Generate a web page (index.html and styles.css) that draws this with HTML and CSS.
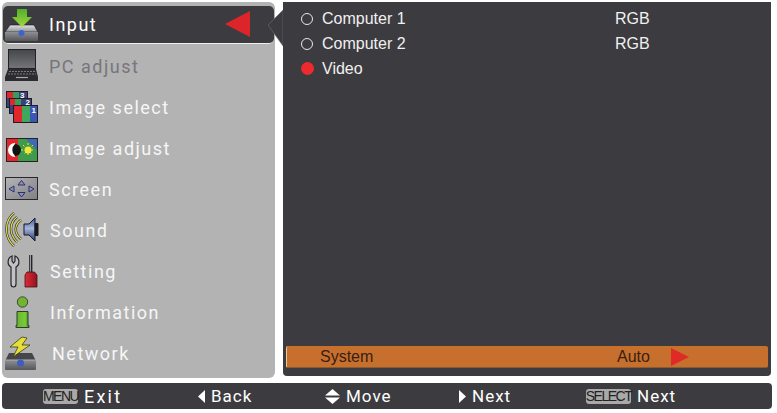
FILE: index.html
```html
<!DOCTYPE html>
<html lang="en">
<head>
<meta charset="utf-8">
<title>Input menu</title>
<link rel="stylesheet" href="styles.css">
</head>
<body>
<div class="screen">
  <div class="main">
    <nav class="menu">
      <div class="item selected">
        <svg class="icon" viewBox="0 0 34 33">
          <defs>
            <linearGradient id="dev" x1="0" y1="0" x2="0" y2="1"><stop offset="0" stop-color="#e2e2e4"/><stop offset="1" stop-color="#8f9094"/></linearGradient>
            <linearGradient id="arrow" x1="0" y1="0" x2="0" y2="1"><stop offset="0" stop-color="#4faf2c"/><stop offset="1" stop-color="#a4d93c"/></linearGradient>
            <linearGradient id="body" x1="0" y1="0" x2="0" y2="1"><stop offset="0" stop-color="#8e9094"/><stop offset="1" stop-color="#55565a"/></linearGradient>
            <linearGradient id="scr" x1="0" y1="0" x2="0" y2="1"><stop offset="0" stop-color="#44464a"/><stop offset="1" stop-color="#74767a"/></linearGradient>
            <linearGradient id="gray" x1="0" y1="0" x2="1" y2="1"><stop offset="0" stop-color="#b5b5b8"/><stop offset="1" stop-color="#808084"/></linearGradient>
            <linearGradient id="cone" x1="0" y1="0" x2="0" y2="1"><stop offset="0" stop-color="#3a5098"/><stop offset=".45" stop-color="#a8b6da"/><stop offset="1" stop-color="#26346c"/></linearGradient>
            <linearGradient id="red" x1="0" y1="0" x2="1" y2="0"><stop offset="0" stop-color="#e02a38"/><stop offset="1" stop-color="#8e1420"/></linearGradient>
            <linearGradient id="grn" x1="0" y1="0" x2="1" y2="0"><stop offset="0" stop-color="#5fb52c"/><stop offset=".7" stop-color="#7ccb36"/><stop offset="1" stop-color="#3c8a2a"/></linearGradient>
          </defs>
          <path d="M5 17H29L33 24H0Z" fill="url(#dev)" stroke="#16161a" stroke-width=".6"/>
          <path d="M0 24H33V32Q33 33 32 33H1Q0 33 0 32Z" fill="url(#body)"/>
          <circle cx="16.500" cy="25" r="3" fill="#3f63c8"/>
          <path d="M12 1H22V9H27L17 19L7 9H12Z" fill="url(#arrow)"/>
        </svg>
        <span class="label">Input</span>
        <svg class="marker" viewBox="0 0 26 26"><path d="M0 13 L25 0 V26Z" fill="#dc2529"/></svg>
      </div>
      <div class="item dim">
        <svg class="icon" viewBox="0 0 34 33">
          <rect x="3.500" y="-.5" width="27" height="19" fill="url(#scr)" stroke="#222226"/>
          <path d="M3 19H31L33 27V31H0V27Z" fill="#2c2c30"/>
          <path d="M4 21.500H30M3 24H31" stroke="#7a7a7e" stroke-dasharray="2 1"/>
          <path d="M11 27.500H23" stroke="#a8a8ac" stroke-width="1.200"/>
        </svg>
        <span class="label">PC adjust</span>
      </div>
      <div class="item">
        <svg class="icon" viewBox="0 0 34 33">
          <g stroke="#1e1e26">
            <rect x="1.500" y=".5" width="21" height="16" fill="#39407c"/>
            <rect x="4.500" y="7.500" width="22" height="15" fill="#39407c"/>
            <rect x="8.500" y="14.500" width="24" height="17" fill="#3a57b4"/>
          </g>
          <rect x="2" y="1" width="6" height="6" fill="#e0282c"/><rect x="8" y="1" width="6" height="6" fill="#3a9c58"/>
          <rect x="5" y="8" width="5" height="6" fill="#e0282c"/><rect x="10" y="8" width="6" height="6" fill="#3a9c58"/>
          <rect x="9" y="15" width="8" height="16" fill="#e0282c"/><rect x="17" y="15" width="8" height="16" fill="#3fa65c"/>
          <text class="digit" x="15" y="6.500">3</text>
          <text class="digit" x="20.400" y="14">2</text>
          <text class="digit" x="26.500" y="22">1</text>
        </svg>
        <span class="label">Image select</span>
      </div>
      <div class="item">
        <svg class="icon" viewBox="0 0 34 33">
          <rect x="1.500" y="6.500" width="31" height="23" fill="#3e68b8" stroke="#222226"/>
          <rect x="2" y="7" width="11" height="22" fill="#e4252b"/>
          <path d="M13 7H21L32 18V29H13Z" fill="#3f9a4c"/>
          <path d="M10 11a7 7 0 0 0 0 14Z" fill="#fff"/><path d="M10 12a6 6 0 0 1 0 12a8 8 0 0 1 0 -12Z" fill="#111"/>
          <circle cx="23" cy="18" r="3.500" fill="#f2e63a"/>
          <path d="M23 11V25M16 18H30M18 13L28 23M28 13L18 23" stroke="#f2e63a" stroke-dasharray="2 8"/>
        </svg>
        <span class="label">Image adjust</span>
      </div>
      <div class="item">
        <svg class="icon" viewBox="0 0 34 33">
          <rect x=".5" y="4.500" width="32" height="22" fill="url(#gray)" stroke="#28282c"/>
          <path d="M16.500 7.500L20 12H13ZM16.500 24L13 19.500H20ZM4 16L9 13V19ZM29 16L24 13V19Z" fill="#8e90b4" stroke="#2c2f70"/>
        </svg>
        <span class="label">Screen</span>
      </div>
      <div class="item snd">
        <svg class="icon" viewBox="0 0 34 33">
          <g fill="none" stroke="#2a2a1e" stroke-width="2.400">
            <path d="M9 -1C-1 7 -1 23 9 32"/><path d="M12 3C4 9 4 20 12 28"/><path d="M16 6C9 11 9 19 16 25"/>
          </g>
          <g fill="none" stroke="#dede52" stroke-width="1.200">
            <path d="M9 -1C-1 7 -1 23 9 32"/><path d="M12 3C4 9 4 20 12 28"/><path d="M16 6C9 11 9 19 16 25"/>
          </g>
          <path d="M19 10H24L30 4V27L24 21H19Z" fill="url(#cone)" stroke="#14182a"/>
          <rect x="29.500" y="9" width="4" height="13" rx="1" fill="#18181c"/>
        </svg>
        <span class="label">Sound</span>
      </div>
      <div class="item set">
        <svg class="icon" viewBox="0 0 34 33">
          <path d="M7 1C2 3 2 10 6 12V29C6 33 11 33 11 29V12C15 10 15 3 10 1V6L8.500 8L7 6Z" fill="#c2c2c4" stroke="#26262a" stroke-width="1.200"/>
          <rect x="24" y="0" width="3.400" height="17" fill="#26262a"/><rect x="24.800" y="0" width="1.200" height="17" fill="#9a9a9e"/>
          <path d="M22 17H29.500L32 20V32H20V20Z" fill="url(#red)" stroke="#4a0e14" stroke-width=".8"/>
        </svg>
        <span class="label">Setting</span>
      </div>
      <div class="item set">
        <svg class="icon" viewBox="0 0 34 33">
          <circle cx="17.500" cy="6" r="5.200" fill="#72b530" stroke="#3c4a3c"/>
          <path d="M12 15.500H23V29.500H24V31.500H11V29.500H12Z" fill="url(#grn)" stroke="#2e3a2e"/>
        </svg>
        <span class="label">Information</span>
      </div>
      <div class="item net">
        <svg class="icon" viewBox="0 0 34 33">
          <path d="M4 16H27L31 24H0Z" fill="#44464a"/>
          <path d="M0 23H31V32Q31 33 30 33H1Q0 33 0 32Z" fill="url(#body)"/>
          <path d="M0 23H31" stroke="#aeb0b4"/>
          <circle cx="15.500" cy="26" r="3.500" fill="#3f5cc0"/>
          <path d="M17 0L5 10H13L8 20L25 8H17L22 1Z" fill="#e6de3a" stroke="#3c3c18" stroke-width=".8"/>
        </svg>
        <span class="label">Network</span>
      </div>
      <svg class="connector" viewBox="0 0 15 36"><path d="M0 15 L15 0 V36Z" fill="#3c3c40" stroke="#707074" stroke-width=".6"/></svg>
    </nav>
    <section class="panel">
      <ul class="options">
        <li class="option"><span class="radio"></span><span class="name">Computer 1</span><span>RGB</span></li>
        <li class="option"><span class="radio"></span><span class="name">Computer 2</span><span>RGB</span></li>
        <li class="option"><span class="radio on"></span><span class="name">Video</span></li>
      </ul>
      <div class="system">
        <span class="sys-name">System</span>
        <span class="sys-val">Auto</span>
        <svg class="sys-arrow" viewBox="0 0 18 18"><path d="M0 0L18 9L0 18Z" fill="#df2a26"/></svg>
      </div>
    </section>
  </div>
  <footer class="bar">
    <div class="hint"><span class="key">MENU</span><span class="big">Exit</span></div>
    <div class="hint"><svg class="tri" viewBox="0 0 7 13"><path d="M7 0V13L0 6.500Z" fill="#fff"/></svg><span>Back</span></div>
    <div class="hint"><svg class="updown" viewBox="0 0 15 15"><path d="M7.500 0L15 6.500H0ZM7.500 15L0 8.500H15Z" fill="#fff"/></svg><span>Move</span></div>
    <div class="hint"><svg class="tri" viewBox="0 0 7 13"><path d="M0 0V13L7 6.500Z" fill="#fff"/></svg><span>Next</span></div>
    <div class="hint"><span class="key wide">SELECT</span><span>Next</span></div>
  </footer>
</div>
</body>
</html>
```
FILE: styles.css
```css
* { box-sizing: border-box; }
html, body { margin: 0; background: #fff; }
.screen { width: 777px; height: 413px; padding: 2px 0 0 2px; font-family: "Roboto", "Liberation Sans", sans-serif; overflow: hidden; }
.main { display: flex; gap: 8px; height: 376px; }
.menu { position: relative; width: 273px; height: 376px; padding-top: 3px; background: #b3b3b3; border-radius: 6px; }
.item { display: flex; align-items: center; height: 41px; padding-left: 3px; color: #f6f6f6; font-size: 18px; letter-spacing: 1.5px; }
.icon { width: 34px; height: 33px; flex: none; overflow: visible; }
.digit { fill: #fff; font-family: "Liberation Sans", sans-serif; font-size: 8px; font-weight: 700; letter-spacing: 0; }
.label { margin-left: 10px; }
.snd .label { margin-left: 11px; }
.set .label { margin-left: 11px; }
.net .label { margin-left: 13px; }
.dim { color: #76767c; }
.selected { position: relative; height: 38px; margin: 1px 1px 2px 1px; padding-left: 2px; background: #3c3c40; border-radius: 5px; border-bottom: 1px solid #eee; color: #fff; }
.marker { position: absolute; left: 222px; top: 5px; width: 26px; height: 26px; }
.connector { position: absolute; left: 266px; top: 8px; width: 15px; height: 36px; }
.panel { display: flex; flex-direction: column; justify-content: space-between; width: 488px; height: 374px; padding: 4px 3px 8px; background: #3c3c40; border-radius: 0 0 4px 4px; color: #f0f0f0; font-family: "Liberation Sans", Arial, sans-serif; font-size: 16px; }
.options { list-style: none; margin: 0; padding: 0 0 0 15px; }
.option { display: flex; align-items: center; height: 25px; }
.radio { width: 12px; height: 12px; flex: none; border: 1px solid #e8e8e8; border-radius: 50%; }
.radio.on { width: 13px; height: 13px; background: #ee2a2e; border-color: #ee2a2e; }
.name { width: 293px; margin-left: 9px; }
.radio.on + .name { margin-left: 8px; }
.system { display: flex; align-items: center; height: 22px; padding: 1px 0 0 33px; background: #c76f2d; border-radius: 2px; border-left: 1px solid #e8c8a0; border-bottom: 1px solid #8a5a30; color: #3a2010; }
.sys-name { width: 297px; }
.sys-val { width: 54px; }
.sys-arrow { width: 18px; height: 18px; }
.bar { display: grid; grid-template-columns: 155px 127px 134px 127px auto; align-items: center; width: 770px; height: 26px; margin-top: 5px; padding-left: 41px; background: #3c3c40; border-radius: 4px; color: #fff; font-size: 17px; letter-spacing: 1px; }
.hint { display: flex; align-items: center; gap: 6px; }
.big { font-size: 18px; letter-spacing: 2.200px; }
.key { display: flex; align-items: center; justify-content: center; width: 35px; height: 15px; background: #a9a9a9; border-radius: 3px; color: #222; font-size: 14px; letter-spacing: -1.5px; font-family: "Liberation Sans", sans-serif; }
.key.wide { width: 45px; }
.tri { width: 7px; height: 13px; }
.updown { width: 15px; height: 15px; }
```
